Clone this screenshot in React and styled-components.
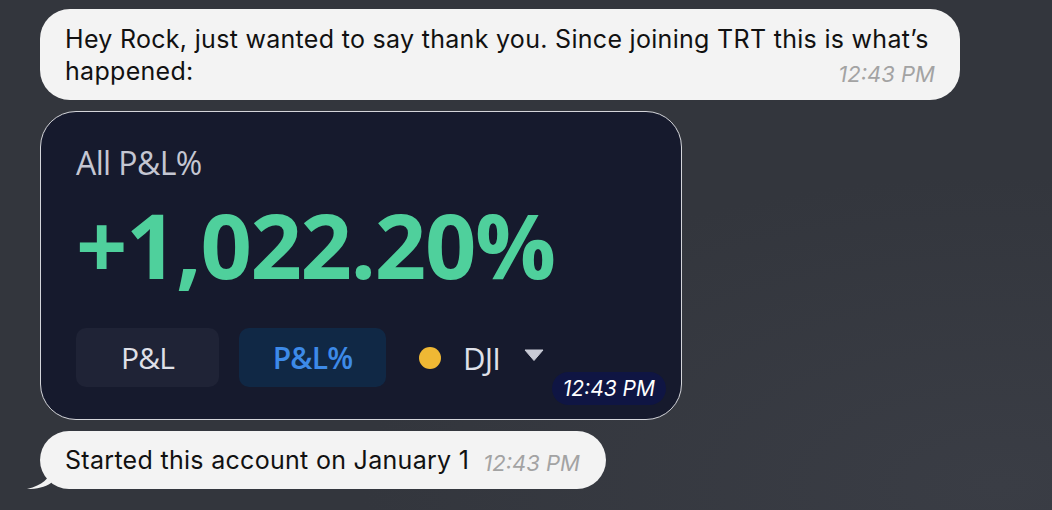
import styled, { createGlobalStyle } from 'styled-components'

const GlobalStyle = createGlobalStyle`
  html, body {
    margin: 0;
    padding: 0;
    background: #33363d;
  }
  body {
    font-family: Inter, "Liberation Sans", sans-serif;
  }
`

const App = () => {
  return (
    <>
      <GlobalStyle />
      <Screen>
        <Bubble>
          <Line>Hey Rock, just wanted to say thank you. Since joining TRT this is what’s</Line>
          <LastLine>
            <span>happened:</span>
            <Meta>12:43 PM</Meta>
          </LastLine>
        </Bubble>

        <Card>
          <CardTitle>All P&amp;L%</CardTitle>
          <BigValue>+1,022.20%</BigValue>
          <ToggleRow>
            <Toggle>P&amp;L</Toggle>
            <Toggle $active>P&amp;L%</Toggle>
            <Index>
              <Dot />
              <span>DJI</span>
              <Caret viewBox="0 0 20 12">
                <path d="M1 1 L19 1 L10 11.5 Z" fill="#c9cbd6" stroke="#c9cbd6" strokeWidth="1" strokeLinejoin="round" />
              </Caret>
            </Index>
          </ToggleRow>
          <TimePill>12:43 PM</TimePill>
        </Card>

        <LastBubble>
          <span>Started this account on January 1</span>
          <InlineTime>12:43 PM</InlineTime>
          <Tail viewBox="0 0 24 20">
            <path d="M24 0 C22 10 16 16 0 20 C10 20 18 18 24 14 Z" fill="#f3f3f3" />
          </Tail>
        </LastBubble>
      </Screen>
    </>
  )
}

export default App

const Screen = styled.div`
  width: 1052px;
  height: 510px;
  box-sizing: border-box;
  padding: 9px 0 0 40px;
  display: flex;
  flex-direction: column;
  align-items: flex-start;
  gap: 11px;
  background: radial-gradient(ellipse at 95% 95%, #3a3d45 0%, #33363d 45%);
  overflow: hidden;
`

const Bubble = styled.div`
  width: 920px;
  height: 91px;
  box-sizing: border-box;
  background: #f3f3f3;
  border-radius: 30px;
  padding: 14px 25px 0;
  color: #111;
  font-size: 25px;
  line-height: 32px;
  letter-spacing: 0.3px;
`

const Line = styled.div`
  white-space: nowrap;
`

const LastLine = styled.div`
  display: flex;
  justify-content: space-between;
  align-items: baseline;
`

const Meta = styled.span`
  position: relative;
  top: 2px;
  font-size: 22px;
  letter-spacing: 0;
  font-style: italic;
  color: #a3a3a3;
`

const Card = styled.div`
  position: relative;
  width: 642px;
  height: 309px;
  box-sizing: border-box;
  background: #161a2d;
  border: 1px solid #d4d5da;
  border-radius: 36px;
  padding: 31px 36px 0 35px;
  font-family: "Open Sans", "Noto Sans", sans-serif;
`

const CardTitle = styled.div`
  color: #c4c6d2;
  font-size: 32px;
  line-height: 40px;
  letter-spacing: -0.6px;
`

const BigValue = styled.div`
  margin-top: 11px;
  color: #4fd09c;
  font-size: 90px;
  font-weight: 700;
  line-height: 100px;
  letter-spacing: -1.4px;
`

const ToggleRow = styled.div`
  margin-top: 34px;
  display: flex;
  align-items: center;
  gap: 20px;
`

const Toggle = styled.div`
  width: ${p => (p.$active ? '147px' : '143px')};
  height: 59px;
  border-radius: 10px;
  display: flex;
  align-items: center;
  justify-content: center;
  font-size: 30px;
  letter-spacing: -0.8px;
  color: ${p => (p.$active ? '#3d8ae8' : '#dfe0e8')};
  font-weight: ${p => (p.$active ? 600 : 400)};
  background: ${p => (p.$active ? '#102845' : '#1f2336')};
`

const Index = styled.div`
  margin-left: 13px;
  display: flex;
  align-items: center;
  gap: 22px;
  color: #dfe0e8;
  font-size: 31px;
  letter-spacing: -0.8px;
`

const Dot = styled.span`
  width: 22px;
  height: 22px;
  border-radius: 50%;
  background: #efb834;
`

const Caret = styled.svg`
  width: 20px;
  height: 12px;
  margin-top: -6px;
  margin-left: 2px;
`

const TimePill = styled.div`
  position: absolute;
  right: 15px;
  bottom: 14px;
  padding: 0 11px;
  height: 33px;
  border-radius: 17px;
  background: #0f1543;
  color: #fff;
  font-family: Inter, "Liberation Sans", sans-serif;
  font-size: 21px;
  font-style: italic;
  display: flex;
  align-items: center;
`

const LastBubble = styled.div`
  position: relative;
  height: 58px;
  box-sizing: border-box;
  background: #f3f3f3;
  border-radius: 29px;
  padding: 0 26px 0 25px;
  display: flex;
  align-items: center;
  gap: 14px;
  color: #111;
  font-size: 25px;
  letter-spacing: 0.3px;
`

const InlineTime = styled.span`
  margin-top: 6px;
  font-size: 22px;
  letter-spacing: 0;
  font-style: italic;
  color: #a3a3a3;
`

const Tail = styled.svg`
  position: absolute;
  left: -13px;
  bottom: 0;
  width: 24px;
  height: 20px;
`
